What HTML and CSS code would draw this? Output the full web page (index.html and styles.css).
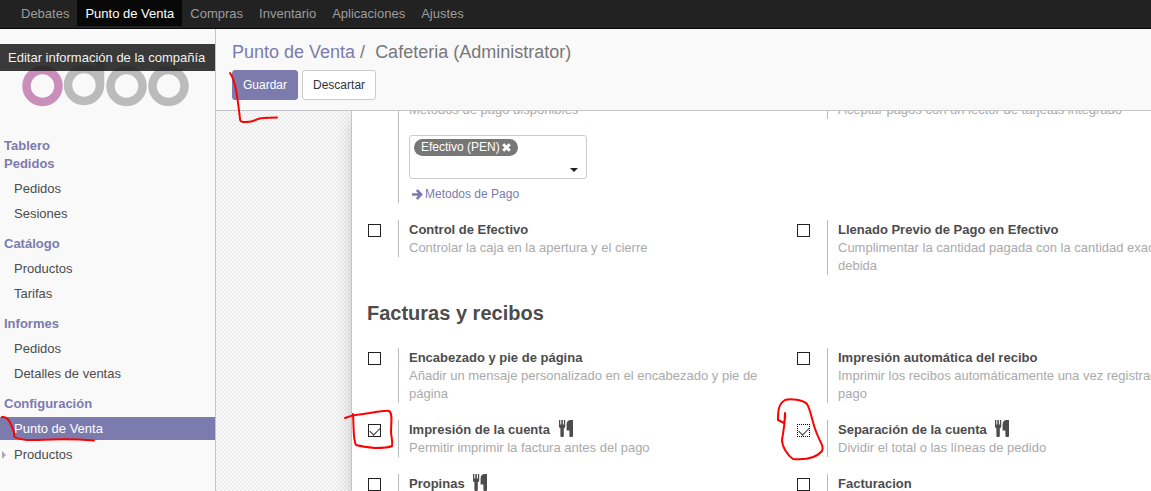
FILE: index.html
```
<!DOCTYPE html>
<html lang="es">
<head>
<meta charset="utf-8">
<title>Punto de Venta</title>
<link rel="stylesheet" href="styles.css">
</head>
<body>
<svg class="defs" aria-hidden="true">
  <symbol id="cutlery" viewBox="0 0 14 17">
    <path d="M0 0h1.300v4.500h1V0h1.600v4.500h1V0h1.300v6.300c0 1-.6 1.700-1.400 2V15.500a1.700 1.700 0 0 1-3.400 0V8.300C.6 8 0 7.300 0 6.300zM14 0v15.500a1.600 1.600 0 0 1-3.600 0V10.500H7.600V4c0-2.400 2-4 4-4z"/>
  </symbol>
</svg>
<nav class="navbar">
  <a href="#">Debates</a>
  <a href="#" class="current">Punto de Venta</a>
  <a href="#">Compras</a>
  <a href="#">Inventario</a>
  <a href="#">Aplicaciones</a>
  <a href="#">Ajustes</a>
</nav>
<div class="app">
  <aside class="sidebar">
    <div class="company">
      <svg class="logo" viewBox="0 0 170 66" role="img" aria-label="odoo">
        <g fill="none" stroke="#bbbbbb" stroke-width="8.500">
          <circle cx="20.500" cy="42" r="16" stroke="#c98fba"/>
          <circle cx="62" cy="41" r="16"/>
          <path d="M78 8v33"/>
          <circle cx="104.500" cy="42" r="16"/>
          <circle cx="146.500" cy="42" r="16"/>
        </g>
      </svg>
      <a href="#" class="company-edit">Editar información de la compañía</a>
    </div>
    <div class="menu">
      <h2>Tablero</h2>
      <section>
        <h2>Pedidos</h2>
        <a href="#">Pedidos</a>
        <a href="#">Sesiones</a>
      </section>
      <section>
        <h2>Catálogo</h2>
        <a href="#">Productos</a>
        <a href="#">Tarifas</a>
      </section>
      <section>
        <h2>Informes</h2>
        <a href="#">Pedidos</a>
        <a href="#">Detalles de ventas</a>
      </section>
      <section>
        <h2>Configuración</h2>
        <a href="#" class="selected">Punto de Venta</a>
        <a href="#" class="parent">Productos</a>
      </section>
    </div>
  </aside>
  <main class="main">
    <header class="panel">
      <h1><a href="#">Punto de Venta</a><span class="slash">/</span>Cafeteria (Administrator)</h1>
      <div class="buttons">
        <button type="button" class="primary">Guardar</button>
        <button type="button">Descartar</button>
      </div>
    </header>
    <div class="content">
      <div class="sheet">
        <div class="row scrolled">
          <div class="setting">
            <div class="tick"></div>
            <div class="body">
              <p>Metodos de pago disponibles</p>
              <div class="tags">
                <span class="tag">Efectivo (PEN)<button type="button" aria-label="Quitar"><svg viewBox="0 0 9 9"><path d="M1.200 1.200l6.600 6.600M7.800 1.200l-6.600 6.600"/></svg></button></span>
                <svg class="caret" viewBox="0 0 8 4"><path d="M0 0h8L4 4z"/></svg>
              </div>
              <a href="#" class="more"><svg viewBox="0 0 11 11"><path d="M0 5.500h9M4.800 1l4.500 4.500L4.800 10"/></svg>Metodos de Pago</a>
            </div>
          </div>
          <div class="setting">
            <div class="tick"></div>
            <div class="body"><p>Aceptar pagos con un lector de tarjetas integrado</p></div>
          </div>
        </div>
        <div class="row">
          <div class="setting">
            <div class="tick"><input type="checkbox" id="cash"></div>
            <div class="body"><label for="cash">Control de Efectivo</label><p>Controlar la caja en la apertura y el cierre</p></div>
          </div>
          <div class="setting">
            <div class="tick"><input type="checkbox" id="prefill"></div>
            <div class="body"><label for="prefill">Llenado Previo de Pago en Efectivo</label><p>Cumplimentar la cantidad pagada con la cantidad exacta debida</p></div>
          </div>
        </div>
        <h2 class="group">Facturas y recibos</h2>
        <div class="row">
          <div class="setting">
            <div class="tick"><input type="checkbox" id="header"></div>
            <div class="body"><label for="header">Encabezado y pie de página</label><p>Añadir un mensaje personalizado en el encabezado y pie de página</p></div>
          </div>
          <div class="setting">
            <div class="tick"><input type="checkbox" id="autoprint"></div>
            <div class="body"><label for="autoprint">Impresión automática del recibo</label><p>Imprimir los recibos automáticamente una vez registrado el pago</p></div>
          </div>
        </div>
        <div class="row">
          <div class="setting">
            <div class="tick"><input type="checkbox" id="bill" checked></div>
            <div class="body"><label for="bill">Impresión de la cuenta <svg><use href="#cutlery"/></svg></label><p>Permitir imprimir la factura antes del pago</p></div>
          </div>
          <div class="setting">
            <div class="tick"><input type="checkbox" id="split" class="focused" checked></div>
            <div class="body"><label for="split">Separación de la cuenta <svg><use href="#cutlery"/></svg></label><p>Dividir el total o las líneas de pedido</p></div>
          </div>
        </div>
        <div class="row">
          <div class="setting">
            <div class="tick"><input type="checkbox" id="tips"></div>
            <div class="body"><label for="tips">Propinas <svg><use href="#cutlery"/></svg></label></div>
          </div>
          <div class="setting">
            <div class="tick"><input type="checkbox" id="invoice"></div>
            <div class="body"><label for="invoice">Facturacion</label></div>
          </div>
        </div>
      </div>
    </div>
  </main>
</div>
<svg class="marks" width="1151" height="491" viewBox="0 0 1151 491" aria-hidden="true">
  <path d="M230 73C236 81 238 102 240 119Q240 122 244 122C256 123 255 118 263 118L277 117.500"/>
  <path d="M2 417C9 416 11 425 14 432L14 436Q16 439 27 440C46 440 63 438 94 440.500"/>
  <path d="M345 418Q352 415 359 414.500C372 413 384 410 389 411C393 413 391 424 391 431C391 437 393 441 392 446Q388 448 375 448C365 447 360 446 356 445C353 440 354 430 353 414"/>
  <path d="M785 413C786 418 784 421 784 423L778 420C778 412 778 404 785 400C791 398 803 400 807 404C811 410 812 423 817 434C821 444 824 446 822 451C816 458 804 460 793 459C787 455 782 446 782 440C783 432 785 427 785 413"/>
</svg>
</body>
</html>
```
FILE: styles.css
```
* { box-sizing: border-box; }
body {
  margin: 0;
  height: 100vh;
  display: flex;
  flex-direction: column;
  overflow: hidden;
  font: 13px/18px "Liberation Sans", Arial, sans-serif;
  color: #4c4c4c;
  background: #fff;
}
a { color: #7c7bad; text-decoration: none; }
h1, h2, p { margin: 0; }
.defs { position: absolute; width: 0; height: 0; }

.navbar {
  flex: none;
  display: flex;
  height: 29px;
  padding-left: 13px;
  background: #222;
  border-bottom: 1px solid #080808;
}
.navbar a { height: 26px; padding: 0 8px; line-height: 27px; color: #9d9d9d; }
.navbar .current { background: #080808; color: #fff; }

.app { flex: 1; min-height: 0; display: flex; }
.sidebar {
  flex: none;
  width: 216px;
  background: #f9f9f9;
  border-right: 1px solid #c4c4c8;
}
.company { position: relative; padding: 15px 22px 27px; }
.logo { display: block; width: 170px; height: 66px; }
.company-edit {
  position: absolute;
  top: 15px;
  left: 0;
  right: 0;
  padding: 5px 8px 4px;
  white-space: nowrap;
  color: #f0f0f0;
  background: rgba(30, 30, 30, .88);
}
.menu h2 { padding-left: 4px; font-size: 13px; line-height: 18px; color: #7c7bad; }
.menu section { margin-bottom: 10px; }
.menu section h2 { margin-bottom: 4px; }
.menu section a {
  display: block;
  margin-bottom: 2px;
  padding-left: 14px;
  line-height: 23px;
  color: #4c4c4c;
}
.menu section .selected { background: #7c7bad; color: #fff; }
.menu section .parent { display: flex; align-items: center; padding: 1px 0 0 2px; }
.parent::before {
  content: "";
  margin-right: 8px;
  border: 4px solid transparent;
  border-left-color: #aaa;
  border-right: 0;
}

.main { flex: 1; min-width: 0; display: flex; flex-direction: column; }
.panel {
  flex: none;
  padding: 13px 16px 10px;
  background: #f9f9f9;
  border-bottom: 1px solid #c4c4c8;
}
.panel h1 {
  margin-bottom: 8px;
  font-size: 18px;
  font-weight: 400;
  line-height: 20px;
  color: #777;
}
.slash { margin: 0 10px 0 5px; }
.buttons { display: flex; gap: 4px; }
.buttons button {
  height: 30px;
  padding: 0 10px;
  font: inherit;
  font-size: 12px;
  color: #333;
  background: #fff;
  border: 1px solid #ccc;
  border-radius: 3px;
}
.buttons .primary { color: #fff; background: #7c7bad; border-color: #7c7bad; }

.content {
  flex: 1;
  min-height: 0;
  overflow: hidden;
  padding-left: 135px;
  background: repeating-conic-gradient(#ececec 0 25%, #fcfcfc 0 50%) 0 0 / 4px 4px;
}
.sheet {
  display: flow-root;
  min-width: 890px;
  min-height: 100%;
  padding-left: 15px;
  background: #fff;
  border-left: 1px solid #c4c4d0;
  box-shadow: 0 5px 20px -5px rgba(0, 0, 0, .3);
}
.row {
  display: grid;
  grid-template-columns: 429px 429px;
  align-items: start;
  margin-bottom: 17px;
}
.scrolled { margin-top: -10px; }
.setting { display: flex; }
.tick { flex: none; width: 31px; padding: 4px 0 0 1px; }
.tick input {
  appearance: none;
  display: block;
  width: 13px;
  height: 13px;
  margin: 0;
  border: 1px solid #222;
  background: #fff;
}
.tick input:checked::after {
  content: "";
  display: block;
  width: 9px;
  height: 5px;
  margin: 2px 0 0 1px;
  border: solid #333;
  border-width: 0 0 1px 1px;
  transform: rotate(-45deg);
}
.tick .focused { border: 1px dotted #000; }
.body { flex: 1; min-width: 0; padding: 0 24px 0 10px; border-left: 1px solid #bbb; }
.body label { display: block; height: 19px; font-weight: 700; line-height: 19px; }
.body label svg { width: 14px; height: 17px; margin: 0 5px; vertical-align: top; fill: #4c4c4c; }
.body p { color: #aaa; }
.group { margin: 0 0 23px; padding-top: 9px; font-size: 20px; line-height: 24px; }

.tags {
  display: flex;
  align-items: flex-start;
  justify-content: space-between;
  width: 178px;
  height: 44px;
  margin: 16px 0 6px;
  padding: 3px 8px 3px 4px;
  border: 1px solid #ccc;
  border-radius: 3px;
}
.tag {
  display: flex;
  align-items: center;
  padding: 0 7px;
  font-size: 12px;
  line-height: 17px;
  color: #fff;
  background: #777;
  border-radius: 9px;
}
.tag button { display: flex; margin-left: 2px; padding: 0; border: 0; background: none; }
.tag svg { width: 9px; height: 9px; stroke: #fff; stroke-width: 3; }
.caret { align-self: flex-end; width: 8px; height: 4px; margin-bottom: 3px; fill: #222; }
.more { display: flex; align-items: center; gap: 2px; padding: 0 3px; font-size: 12px; }
.more svg { width: 11px; height: 11px; fill: none; stroke: #7c7bad; stroke-width: 2.5; }

.marks {
  position: absolute;
  top: 0;
  left: 0;
  pointer-events: none;
  fill: none;
  stroke: #f00;
  stroke-width: 2;
  stroke-linecap: round;
  stroke-linejoin: round;
}
```
